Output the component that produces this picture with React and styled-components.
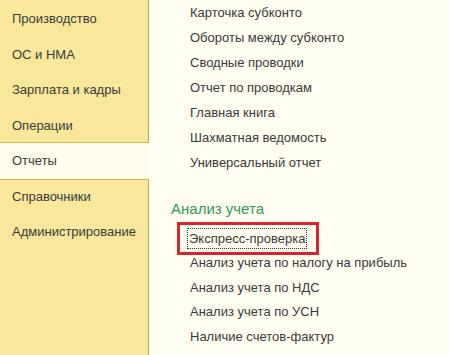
import React from "react";
import styled, { createGlobalStyle } from "styled-components";

const GlobalStyle = createGlobalStyle`
  html, body {
    margin: 0;
    padding: 0;
    background: #fffef0;
  }
  body {
    font-family: Arial, "Liberation Sans", sans-serif;
  }
`;

// layout
const Page = styled.div`
  display: flex;
  width: 449px;
  height: 355px;
  overflow: hidden;
  background: #fffef0;
`;

const Sidebar = styled.nav`
  width: 149px;
  flex-shrink: 0;
  background: #f9e89c;
  border-right: 1px solid #c4a73c;
  padding-top: 1px;
  box-sizing: border-box;
`;

const SideItem = styled.div`
  height: ${(props) => (props.active ? "37.5px" : "35.5px")};
  margin: ${(props) => (props.active ? "-1px -1px -1px 0" : "0")};
  display: flex;
  align-items: center;
  padding-left: 12px;
  font-size: 13px;
  color: #3a3a3a;
  box-sizing: border-box;
  background: ${(props) => (props.active ? "#fffeec" : "transparent")};
  border-top: 1px solid ${(props) => (props.active ? "#cdb655" : "transparent")};
  border-bottom: 1px solid ${(props) => (props.active ? "#cdb655" : "transparent")};
`;

const Content = styled.main`
  flex: 1;
  padding-left: 22px;
`;

const Group = styled.div`
  display: flex;
  flex-direction: column;
  align-items: flex-start;
`;

const Heading = styled.div`
  margin: 23px 0 6px 0;
  line-height: 22px;
  font-size: 15px;
  color: #2f9a58;
`;

const Link = styled.div`
  line-height: ${(props) => props.step || 25}px;
  height: ${(props) => props.step || 25}px;
  padding-left: 19px;
  font-size: 13px;
  color: #3a3a3a;
  white-space: nowrap;
`;

const Marked = styled.div`
  display: flex;
  align-items: center;
  height: 25px;
  margin-left: 10px;
  padding: 0 8px 0 6px;
  outline: 3px solid #d8242c;
  outline-offset: 1px;
`;

const Focused = styled.span`
  font-size: 13px;
  color: #3a3a3a;
  line-height: 19px;
  padding: 0 1px;
  border: 1px dotted #333;
  white-space: nowrap;
`;

const sections = [
  "Производство",
  "ОС и НМА",
  "Зарплата и кадры",
  "Операции",
  "Отчеты",
  "Справочники",
  "Администрирование",
];

const reports = [
  "Карточка субконто",
  "Обороты между субконто",
  "Сводные проводки",
  "Отчет по проводкам",
  "Главная книга",
  "Шахматная ведомость",
  "Универсальный отчет",
];

const analysis = [
  "Анализ учета по налогу на прибыль",
  "Анализ учета по НДС",
  "Анализ учета по УСН",
  "Наличие счетов-фактур",
];

export default function App() {
  return (
    <>
      <GlobalStyle />
      <Page>
        <Sidebar>
          {sections.map((item) => (
            <SideItem key={item} active={item === "Отчеты"}>
              {item}
            </SideItem>
          ))}
        </Sidebar>
        <Content>
          <Group>
            {reports.map((item) => (
              <Link key={item}>{item}</Link>
            ))}
          </Group>
          <Heading>Анализ учета</Heading>
          <Group>
            <Marked>
              <Focused>Экспресс-проверка</Focused>
            </Marked>
            {analysis.map((item) => (
              <Link key={item} step={24.7}>
                {item}
              </Link>
            ))}
          </Group>
        </Content>
      </Page>
    </>
  );
}
